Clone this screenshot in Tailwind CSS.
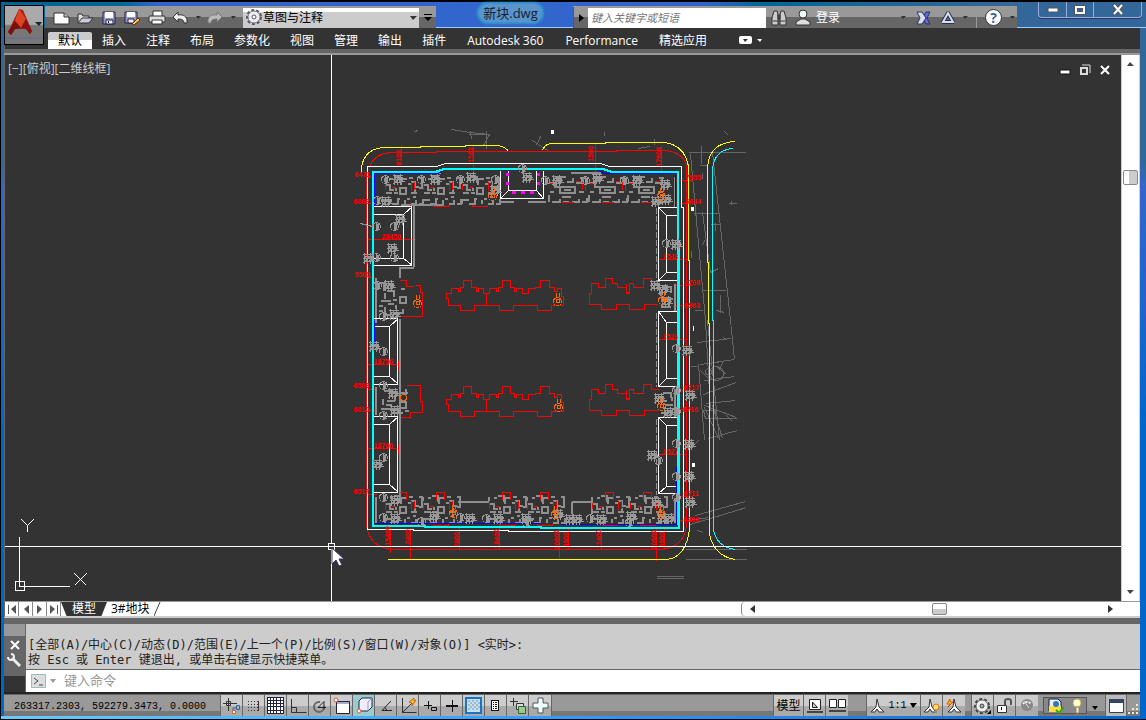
<!DOCTYPE html>
<html lang="zh-CN">

<head>
    <meta charset="UTF-8">
    <meta name="viewport" content="width=device-width, initial-scale=1.0">
    <title>新块.dwg</title>
    <script src="https://cdn.jsdelivr.net/npm/@tailwindcss/browser@4"></script>
</head>

<body class="h-screen overflow-hidden bg-black font-['Open_Sans','Noto_Sans_CJK_SC',sans-serif] text-xs">
    <div class="relative flex h-full flex-col border-t-2 border-b border-l border-black bg-[linear-gradient(to_bottom,#369_0%,#369_22%,#36c_26%,#06c_60%,#06c_100%)] pl-[3px] pr-[6px]">

        <!-- Title bar -->
        <header class="-mr-[6px] -ml-[3px] flex h-[26px] shrink-0 bg-[linear-gradient(to_right,#069_0,#069_120px,#36c_160px,#36c_700px,#069_760px,#369_1000px)] pl-[44px] pt-1">
            <div class="flex w-[391px] shrink-0 items-center border-t border-[#999] bg-linear-to-b from-[#999] from-48% to-[#666] to-48% pl-2">
                <button aria-label="新建" class="w-6"><svg width="18" height="16" viewBox="0 0 18 16"><path d="M1 3h10l5 4v7H1z" fill="#fff" stroke="#333" /><path d="M11 3v4h5" fill="#bbb" stroke="#333" /></svg></button>
                <button aria-label="打开" class="w-6"><svg width="17" height="16" viewBox="0 0 17 16"><path d="M1 13V4h4l1 2h6v2" fill="#ddd" stroke="#333" /><path d="M1 13l4-5h11l-4 5z" fill="#ccd" stroke="#333" /></svg></button>
                <button aria-label="保存" class="w-6"><svg width="16" height="16" viewBox="0 0 16 16"><path d="M2 2h12v12H2z" fill="#99c" stroke="#224" /><path d="M4 2h8v6H4z" fill="#fff" /><path d="M5 10h7v4H5z" fill="#eee" stroke="#224" /><path d="M7 11h1v2H7z" fill="#224" /></svg></button>
                <button aria-label="另存为" class="w-6"><svg width="17" height="16" viewBox="0 0 17 16"><path d="M1 2h12v11H1z" fill="#99c" stroke="#224" /><path d="M3 2h8v5H3z" fill="#fff" /><path d="M4 9h6v4H4z" fill="#eee" stroke="#224" /><path d="M8 14l6-6 2 2-6 5z" fill="#fc6" stroke="#630" /></svg></button>
                <button aria-label="打印" class="w-6"><svg width="18" height="16" viewBox="0 0 18 16"><path d="M5 1h9v6H5z" fill="#fff" stroke="#333" /><rect x="1" y="6" width="16" height="6" rx="1" fill="#ddd" stroke="#333" /><path d="M4 10h10v4H4z" fill="#fff" stroke="#333" /></svg></button>
                <button aria-label="放弃" class="w-5"><svg width="16" height="16" viewBox="0 0 16 16"><path d="M1 7l5-5v3c6-1 9 2 9 6v2h-3c0-3-2-4-6-4v3z" fill="#eee" stroke="#333" /></svg></button>
                <button aria-label="放弃列表" class="w-4"><svg width="12" height="6" viewBox="0 0 12 6"><path d="M4 1h5L6 4z" fill="#333" /></svg></button>
                <button aria-label="重做" class="w-5"><svg width="16" height="16" viewBox="0 0 16 16"><path d="M15 7l-5-5v3c-6-1-9 2-9 6v2h3c0-3 2-4 6-4v3z" fill="#bbb" stroke="#777" /></svg></button>
                <button aria-label="重做列表" class="w-4"><svg width="12" height="6" viewBox="0 0 12 6"><path d="M4 1h5L6 4z" fill="#333" /></svg></button>
                <div class="relative h-5 w-[178px] border-t-4 border-white bg-[#ccc]">
                    <svg class="absolute -top-[3px] left-[3px]" width="17" height="17" viewBox="0 0 17 17"><circle cx="8" cy="8" r="7" fill="none" stroke="#556" stroke-width="2" stroke-dasharray="3 2" /><circle cx="8" cy="8" r="6" fill="#eee" stroke="#778" /><circle cx="8" cy="8" r="2" fill="#fff" stroke="#556" /></svg>
                    <select aria-label="工作空间" class="-mt-[2px] block h-[17px] w-full appearance-none pl-[20px] text-xs leading-4 text-black">
                        <option>草图与注释</option>
                    </select>
                    <svg class="absolute top-1 right-[2px]" width="7" height="4" viewBox="0 0 7 4"><path d="M0 0h7L3 4z" fill="#333" /></svg>
                </div>
                <button aria-label="自定义" class="flex h-full w-[17px] items-center justify-center"><svg width="8" height="8" viewBox="0 0 8 8"><path d="M0 0h8v1H0zM0 3h8L4 7z" fill="#000" /></svg></button>
            </div>
            <div class="flex w-[137px] shrink-0 justify-center border-b border-[#9cf] bg-[#36c]">
                <h1 class="-mt-[2px] ml-3 h-[18px] rounded-full bg-[#5b94cc] px-1 text-[13px] leading-[18px] text-[#123] shadow-[0_0_2px_2px_#39c]">新块.dwg</h1>
            </div>
            <div class="flex w-[444px] shrink-0 items-center border-t border-[#999] bg-linear-to-b from-[#999] from-48% to-[#666] to-48%">
                <button aria-label="展开" class="flex h-full w-[15px] items-center justify-center border-l border-[#555]"><svg width="5" height="8" viewBox="0 0 5 8"><path d="M0 0l5 4-5 4z" fill="#000" /></svg></button>
                <input type="text" aria-label="搜索" placeholder="键入关键字或短语" class="h-5 w-[178px] bg-white pl-[3px] text-[11px] italic placeholder:text-[#777]">
                <button aria-label="查找" class="ml-[5px]"><svg width="16" height="16" viewBox="0 0 16 16"><path d="M3 1h3l1 4v10H1V8zM10 1h3l2 7v7H9V5z" fill="#ccc" stroke="#333" /><path d="M7 5h2v4H7zM2 11h5M9 11h5" fill="#555" stroke="#333" /></svg></button>
                <button class="ml-2 flex items-center gap-[5px] text-white"><svg width="16" height="17" viewBox="0 0 16 17"><path d="M1 16v-3l5-3h4l5 3v3z" fill="#ddd" stroke="#333" /><circle cx="8" cy="5" r="4" fill="#eff" stroke="#333" /></svg>登录</button>
                <svg class="ml-[61px]" width="5" height="3" viewBox="0 0 5 3"><path d="M0 0h5L2 3z" fill="#333" /></svg>
                <button aria-label="Exchange" class="ml-[10px]"><svg width="15" height="14" viewBox="0 0 15 14"><path d="M14 1h-4L6 7l4 6h4l-3-6z" fill="#66d" stroke="#236" /><path d="M1 1h5l4 6-4 6H1l3-6z" fill="#dde" stroke="#236" /></svg></button>
                <button aria-label="Autodesk 360" class="ml-[9px]"><svg width="16" height="15" viewBox="0 0 16 15"><path d="M8 3l5 9H3z" fill="none" stroke="#236" stroke-width="4" stroke-linejoin="round" /><path d="M8 3l5 9H3z" fill="none" stroke="#ddd" stroke-width="2" /></svg></button>
                <svg class="ml-[7px]" width="5" height="3" viewBox="0 0 5 3"><path d="M0 0h5L2 3z" fill="#333" /></svg>
                <span class="mt-2 ml-2 h-3 w-px bg-[#999]"></span>
                <button aria-label="帮助" class="ml-2 h-[17px] w-[17px] rounded-full border border-[#333] bg-white text-center text-sm leading-[15px] font-bold text-[#369]">?</button>
                <svg class="ml-[8px]" width="5" height="3" viewBox="0 0 5 3"><path d="M0 0h5L2 3z" fill="#333" /></svg>
            </div>
            <div class="flex flex-1 justify-end border-b border-[#9cf] pr-1">
                <div class="-mt-1 flex h-4 rounded-b border-x border-b border-[#9ad] shadow-[0_1px_0_#336]">
                    <button aria-label="最小化" class="flex w-[28px] items-center justify-center border-r border-[#9ad]"><svg width="12" height="6" viewBox="0 0 12 6"><path d="M1 1h10v4H1z" fill="#fff" stroke="#555" /></svg></button>
                    <button aria-label="最大化" class="flex w-[27px] items-center justify-center border-r border-[#9ad]"><svg width="12" height="10" viewBox="0 0 12 10"><path d="M2 2h8v6H2z" fill="none" stroke="#555" stroke-width="4" /><path d="M2 2h8v6H2z" fill="none" stroke="#fff" stroke-width="2" /></svg></button>
                    <button aria-label="关闭" class="flex w-[47px] items-center justify-center"><svg width="12" height="11" viewBox="0 0 12 11"><path d="M2 1l8 9M10 1L2 10" stroke="#555" stroke-width="4" /><path d="M2 1l8 9M10 1L2 10" stroke="#fff" stroke-width="2" /></svg></button>
                </div>
            </div>
        </header>

        <!-- Application button -->
        <button aria-label="应用程序菜单" class="absolute top-[3px] left-[3px] z-10 h-10 w-10 border border-black bg-linear-to-b from-[#aaa] from-48% to-[#777] to-52%">
            <svg width="38" height="38" viewBox="0 0 38 38"><path d="M14 3l4 1 9 21-2 3-4-5H10l-4 6-3-3z" fill="#a21" /><path d="M14 3l-4 12 6 7 5-9z" fill="#d42" /><path d="M3 26l7-11 6 7-6 1-4 6z" fill="#711" /><path d="M16 22l5-9 6 12-2 3-4-5z" fill="#811" /><path d="M30 16h7l-3 4z" fill="#222" /><path d="M0 32h38" stroke="#669" /></svg>
        </button>

        <!-- Ribbon tabs -->
        <nav class="flex h-[21px] shrink-0 items-end border-l border-[#666] bg-[#333] pl-[43px] text-white">
            <button class="h-[17px] rounded-t-xs bg-linear-to-b from-[#ccc] from-50% to-white to-50% px-[10px] leading-[17px] text-black">默认</button>
            <button class="px-[10px] leading-[17px]">插入</button>
            <button class="px-[10px] leading-[17px]">注释</button>
            <button class="px-[10px] leading-[17px]">布局</button>
            <button class="px-[10px] leading-[17px]">参数化</button>
            <button class="px-[10px] leading-[17px]">视图</button>
            <button class="px-[10px] leading-[17px]">管理</button>
            <button class="px-[10px] leading-[17px]">输出</button>
            <button class="px-[10px] leading-[17px]">插件</button>
            <button class="px-[11px] leading-[17px]">Autodesk 360</button>
            <button class="px-[11px] leading-[17px]">Performance</button>
            <button class="px-[10px] leading-[17px]">精选应用</button>
            <button aria-label="功能区选项" class="mb-[5px] ml-[22px]"><svg width="24" height="8" viewBox="0 0 24 8"><rect width="13" height="8" rx="2" fill="#fff" /><path d="M4 3h5L6 6z" fill="#333" /><path d="M18 3h5l-2 3z" fill="#fff" /></svg></button>
        </nav>
        <div class="h-[6px] shrink-0 border-b-2 border-[#999] bg-[#666]"></div>

        <!-- Drawing area -->
        <main class="flex min-h-0 flex-1 border-l border-[#666]">
            <div class="relative min-w-0 flex-1 overflow-hidden bg-[#333]">
                <svg class="absolute inset-0 h-full w-full" fill="none" shape-rendering="crispEdges">
                    <defs>
                        <!-- flat plan, origin at the stair core -->
                        <g id="flat">
                            <path d="M-3-4h6v6h-6z M-18-7h5v5h4 M-9-15h6v6 M-2-7v-6h6 M8-10h4v5h4 M16-14h3v10h-3 M-17 1h6 M-9 1h4 M8 1h6 M12-3v5 M-18 12V8h4 M-11 12h6V8 M2 12V8 M8 12h5V8 M16 12h4V7 M-6 7h3 M4 7h3 M-18-14v4 M-7-4v3 M5-8h3 M-13-13h3 M6-14h4 M-14 8h3 M10 5h3" stroke="#8f8f8f" stroke-width="2" />
                            <path d="M-7 13v2H8v-2 M-17-8v6 M9-10v9 M12-10v8 M-11-4h4" stroke="#f00" />
                        </g>
                        <g id="flatwide">
                            <path d="M-7-3H8v6H-7z M-3 0h7 M-18-7h6v4h4 M-9-8v-5h8 M0-8h6v-4 M9-7h7v-5 M-18 12V8 M-15 12h8V9 M-4 12h6 M0 8v-2 M5 12h7V9 M15 12h5V8 M-17 2h4 M12 2h5 M-12-12h5 M13-12h5 M-18 5v4 M-5 7h9" stroke="#8f8f8f" stroke-width="2" />
                            <path d="M-17-6h4 M-5 13H7 M16-8v8 M19-8v9 M9-8h4" stroke="#f00" />
                        </g>
                        <g id="block" stroke="#999">
                            <path d="M0 2h10 M2 0v11 M5 1v10 M0 6h11 M1 10l8-7 M8 0v11 M3 4h6v5H2z M6 8h6 M10 3v5" />
                        </g>
                        <g id="ring" stroke="#999">
                            <circle r="4" /><path d="M0-4v8 M1-3v6 M2-3v6" />
                        </g>
                        <g id="lift" stroke="#f60">
                            <circle r="4" /><path d="M-1-2h3v3h-3z M-1-9v4 M2-9v4" />
                        </g>
                        <!-- tower outlines -->
                        <g id="towers" stroke="#f00">
                            <path d="M474 416H460V411H448V404H446V399H451V394H458V397H460V393H463V386H471V393H476V397H478V394H483V399H486V411H474Z" />
                            <path d="M486 411H499V416H513V411H537V416H551V411H563V402H561V394H557V397H554V393H549V386H540V393H535V394H528V399H522V394H516V397H514V393H510V386H502V393H498V397H496V394H489V399H486" />
                            <path d="M657 410h-13v5h-15v-5h-13v5h-15v-5h-12v-11h2v-10h7v4h7v-9h7v5h5v4h9v6h3v-10h4v4h10v-9h8v5h8" />
                            <path d="M626 389v9h3" />
                        </g>
                    </defs>

                    <g transform="translate(-4.5 -54.5)">
                        <!-- survey background -->
                        <g stroke="#666">
                            <path d="M688 152h57 M690 154l15 166 5 90 M712 152l18 168 4 39 M693 213h26 M701 290h24 M707 320l12 120 M694 310h8 M702 212l8 60 8-4 M697 342l34-4 M700 364l34 -5 M698 364l6 76 M704 380l30-4 M703 394l33-12 M706 403l29-3 M704 405l32 12 M705 418h31 M708 438l29-8 M704 407l14 31 M712 405l10 33 M698 440l-4 4" />
                            <path d="M695 515l50-14 M690 524l56-17 M688 520l20-3 M685 559h61 M685 549h61 M656 576h27 M656 578h27 M451 129l18 3 20 2 M470 131l1 8 M486 130v18 M489 134l-6 11 M532 140l18 12 M536 145l4-9 M468 134h20 M724 131l4 4 M414 131l4-1 M604 131v4 M654 138v6 M638 148l12-2 M701 145v18 M699 165h8 M702 172v6 M710 224h10 M715 222v8 M728 203h8 M731 200v4 M704 240l-2 5 M720 294v18 M716 310l8 2 M691 250v7 M700 370l8 8 M716 366l10 8 M722 362l-3 7 M703 532l-6-2" />
                            <circle cx="716" cy="373" r="7" /><circle cx="708" cy="371" r="3" />
                            <path d="M712 362h6 M723 337l4 3 M690 366h6 M726 415l6 6 M703 410h12v8h-10z" />
                        </g>

                        <!-- red line and roads -->
                        <g stroke="#f00">
                            <path d="M366 172V525Q369 547 392 549H662Q684 546 686 524V166Q683 151 663 150H616V151H436V152H392Q372 153 369 168" />
                            <path d="M401 145v15 M473 145v28 M595 142v35 M661 145v28 M390 527v25 M410 527v31 M459 527v22 M499 527v22 M559 527v31 M568 527v22 M601 527v22 M656 527v33 M664 527v22" />
                            <path d="M366 177h6 M362 203h10 M366 277h8 M366 389h9 M364 410h10 M366 494h10 M674 180h18 M674 203h18 M674 285h18 M674 305h18 M674 390h18 M674 409h18 M674 496h18 M674 520h18" />
                            <path d="M366 239h49 M366 364h33 M366 448h33 M656 259h29 M656 339h30 M656 454h30 M413 235v8 M398 360v9 M398 444v9 M657 256v7 M657 335v8" />
                        </g>
                        <g stroke="#ff0">
                            <path d="M361 172V166Q365 147 385 147H420V146H465V145H497Q505 146 508 151 M542 150Q544 144 550 143H605V142H663Q684 144 688 166V200M688 200V260H689V528Q686 556 667 559H387" />
                            <path d="M735 141Q708 142 707 168V262H708V323H709V534Q714 556 735 559" />
                        </g>
                        <path d="M733 148Q713 149 712 170V320H713V530Q717 547 735 549" stroke="#0ff" />

                        <!-- flats along the edge -->
                        <path d="M413 204v62 M413 267h-14v10 M399 318v178 M400 204h43 M500 201h13 M527 201h18" stroke="#8f8f8f" stroke-width="2" />
                        <path d="M656 207v74 M656 312v74 M656 418v76" stroke="#8f8f8f" stroke-dasharray="6 2" />
                        <path d="M375 277v45 M375 386v28 M375 496v27 M674 176v30 M674 283v27 M674 388v28 M674 497v25 M457 501h31 M571 501h20v12 M571 501v12 M400 172h40 M570 172h30" stroke="#8f8f8f" stroke-width="2" />
                        <use href="#flat" x="402" y="191" /><use href="#flat" x="440" y="191" /><use href="#flat" x="479" y="191" />
                        <use href="#flatwide" x="566" y="189" /><use href="#flatwide" x="606" y="189" /><use href="#flatwide" x="645" y="189" />
                        <use href="#flat" x="402" y="510" /><use href="#flat" x="440" y="510" /><use href="#flat" x="506" y="510" /><use href="#flat" x="544" y="510" />
                        <use href="#flat" x="609" y="510" /><use href="#flat" x="647" y="510" />
                        <path d="M399 492h7v7 M436 499v-7h8v7 M502 499v-7h8v7 M540 499v-7h8v7 M605 499v-7h8v7 M643 499v-7h8v7" stroke="#f00" />
                        <g stroke="#8f8f8f" stroke-width="2">
                            <path d="M399 296h6v6h-6z M378 282h5v8 M386 290h7v6 M380 300h10 M384 306v8h6 M393 312h8 M395 304v4 M390 283v4 M384 292v6 M378 305h4 M392 299h4 M400 288h4 M402 308v5 M378 310h4 M387 303h6" />
                            <path d="M399 401h6v6h-6z M383 390h8v6 M380 408h14 M386 400h8 M392 412h10 M400 392h7 M405 388v6 M382 398v6 M394 396v4 M385 404h6 M408 410h-4" />
                            <path d="M662 286h8v6 M664 298h8 M660 306h10 M662 392h8v5 M664 404h8 M660 412h8 M660 290v5 M668 302v4 M671 396v4 M661 400h5" />
                        </g>
                        <path d="M399 280h7v6h7 M414 285h6v7h2v24h-24 M406 385h14v16h2v11h-12v5h-10" stroke="#f00" />

                        <use href="#towers" /><use href="#towers" y="-106" />

                        <!-- podium roofs -->
                        <g stroke="#fff">
                            <path d="M373 206h38v59h-38 M373 214h30v44h-30 M403 214l9-8 M403 258l9 7" />
                            <path d="M373 318h24v66h-24 M373 326h16v50h-16 M389 326l9-8 M389 376l9 8" />
                            <path d="M373 416h24v76h-24 M373 424h16v60h-16 M389 424l9-8 M389 484l9 8" />
                            <path d="M677 207h-19v73h19 M677 215h-11v57h11 M666 215l-8-8 M666 272l-8 8" />
                            <path d="M677 311h-19v75h19 M677 322h-11v56h11 M666 322l-8-11 M666 378l-8 8" />
                            <path d="M677 417h-19v76h19 M677 425h-11v61h11 M666 425l-8-8 M666 486l-8 7" />
                            <path d="M500 170v28h43v-28 M508 170v20h28v-20 M508 190l-8 8 M536 190l7 8" />
                        </g>
                        <path d="M505 174h3 M505 183h3 M511 192h4 M520 192h4 M529 192h4 M536 174h3 M536 183h3" stroke="#f0f" stroke-width="3" />

                        <!-- plot boundary -->
                        <path d="M367 166H436L445 163H600L609 166H681V207H683V531H508V530H413V529H367Z" stroke="#fff" />
                        <path d="M374 205V173H437L443 171 M598 170L606 173H675V206 M374 320V345 M374 523H540 M676 466V524H560" stroke="#00f" />
                        <path d="M372 170V525H424V526H540V527H678V240H677V171H610L601 168H445L436 171H372" stroke="#0ff" stroke-width="2" />
                        <path d="M372 172V524 M677 172V524" stroke="#0ff" stroke-width="2" />

                        <!-- annotation blocks -->
                        <use href="#ring" x="385" y="179" /><use href="#block" x="392" y="173" /><use href="#ring" x="421" y="179" /><use href="#block" x="429" y="173" />
                        <use href="#ring" x="460" y="179" /><use href="#block" x="465" y="171" /><use href="#ring" x="495" y="179" /><use href="#block" x="489" y="184" />
                        <use href="#ring" x="377" y="200" /><use href="#block" x="380" y="195" /><use href="#ring" x="522" y="168" /><use href="#block" x="521" y="171" />
                        <use href="#ring" x="545" y="180" /><use href="#block" x="551" y="174" /><use href="#ring" x="585" y="180" /><use href="#block" x="591" y="172" />
                        <use href="#ring" x="624" y="180" /><use href="#block" x="631" y="174" /><use href="#block" x="659" y="178" /><use href="#block" x="650" y="195" /><use href="#block" x="660" y="193" />
                        <use href="#ring" x="376" y="226" /><use href="#ring" x="394" y="226" /><use href="#block" x="394" y="213" /><path d="M360 223l12 3" stroke="#8f8f8f" />
                        <use href="#block" x="386" y="242" /><use href="#ring" x="394" y="257" /><use href="#ring" x="376" y="257" /><use href="#block" x="362" y="252" />
                        <use href="#ring" x="377" y="285" /><use href="#block" x="383" y="279" /><use href="#block" x="388" y="308" /><use href="#ring" x="383" y="316" />
                        <use href="#ring" x="383" y="351" /><use href="#block" x="368" y="340" /><use href="#ring" x="383" y="385" /><use href="#block" x="387" y="387" /><use href="#block" x="389" y="404" /><use href="#ring" x="383" y="415" />
                        <use href="#ring" x="383" y="457" /><use href="#block" x="371" y="458" /><use href="#ring" x="383" y="497" /><use href="#block" x="389" y="494" />
                        <use href="#ring" x="383" y="517" /><use href="#block" x="389" y="512" /><use href="#ring" x="421" y="521" /><use href="#block" x="428" y="510" /><use href="#ring" x="460" y="517" />
                        <use href="#block" x="464" y="512" /><use href="#ring" x="486" y="518" /><use href="#block" x="492" y="512" /><use href="#block" x="520" y="512" /><use href="#ring" x="526" y="522" />
                        <use href="#block" x="552" y="508" /><use href="#block" x="564" y="513" /><use href="#block" x="571" y="513" /><use href="#ring" x="590" y="518" /><use href="#block" x="595" y="513" />
                        <use href="#block" x="625" y="510" /><use href="#ring" x="629" y="522" /><use href="#block" x="656" y="512" /><use href="#block" x="650" y="496" /><use href="#block" x="663" y="512" />
                        <use href="#ring" x="666" y="243" /><use href="#block" x="670" y="238" /><use href="#block" x="649" y="279" /><use href="#block" x="660" y="295" /><use href="#block" x="657" y="283" />
                        <use href="#ring" x="676" y="348" /><use href="#block" x="681" y="344" /><use href="#block" x="684" y="389" /><use href="#block" x="653" y="392" /><use href="#block" x="662" y="406" /><use href="#ring" x="676" y="411" /><use href="#ring" x="676" y="390" />
                        <use href="#ring" x="676" y="443" /><use href="#block" x="683" y="438" /><use href="#block" x="646" y="449" /><use href="#ring" x="658" y="460" />
                        <use href="#ring" x="676" y="476" /><use href="#block" x="683" y="470" /><use href="#block" x="684" y="496" /><use href="#ring" x="676" y="497" />

                        <use href="#lift" x="417" y="303" /><use href="#lift" x="557" y="301" /><use href="#lift" x="558" y="407" /><use href="#lift" x="661" y="406" />
                        <use href="#lift" x="453" y="513" /><use href="#lift" x="555" y="514" /><use href="#lift" x="661" y="514" /><use href="#lift" x="492" y="196" /><use href="#lift" x="661" y="196" /><use href="#lift" x="662" y="300" />
                        <circle cx="403" cy="397" r="3" stroke="#f60" />

                        <path d="M551 130h2v3h-2z M691 207h2v3h-2z M693 325v5 M692 463h2v3h-2z" fill="#fff" stroke="#fff" />

                        <!-- dimensions -->
                        <g fill="#f00" class="font-['Liberation_Sans',sans-serif] text-[7px] font-bold">
                            <text x="354" y="176">6471</text><text x="353" y="203">6002</text><text x="381" y="238">28450</text><text x="354" y="276">5500</text>
                            <text x="373" y="363">18756</text><text x="353" y="387">6508</text><text x="353" y="411">6010</text><text x="373" y="447">18766</text><text x="353" y="493">6517</text>
                            <text x="685" y="179">7955</text><text x="685" y="203">6644</text><text x="662" y="258">1548</text><text x="684" y="284">6708</text><text x="684" y="307">5563</text>
                            <text x="662" y="338">1524</text><text x="683" y="389">6717</text><text x="682" y="411">6716</text><text x="662" y="453">1527</text><text x="683" y="495">6711</text><text x="683" y="521">6200</text>
                            <text transform="translate(400 165) rotate(-90)">8108</text><text transform="translate(472 162) rotate(-90)">1103</text><text transform="translate(592 161) rotate(-90)">1560</text><text transform="translate(660 166) rotate(-90)">17604</text>
                            <text transform="translate(389 545) rotate(-90)">15480</text><text transform="translate(409 548) rotate(-90)">12400</text><text transform="translate(458 547) rotate(-90)">7800</text><text transform="translate(498 548) rotate(-90)">18400</text>
                            <text transform="translate(558 549) rotate(-90)">20600</text><text transform="translate(567 547) rotate(-90)">4600</text><text transform="translate(600 548) rotate(-90)">11400</text><text transform="translate(655 549) rotate(-90)">20600</text><text transform="translate(663 547) rotate(-90)">4600</text>
                        </g>

                        <!-- UCS icon -->
                        <path d="M19 536v50h50 M15 581h9v9h-9z M21 519l6 6 6-6 M27 525v6 M74 573l12 12 M86 573l-12 12" stroke="#fff" />
                        <path d="M328 543h6v6h-6z" stroke="#fff" />
                        <path d="M331 54v489 M331 549v52" stroke="#fff" />
                    </g>
                    <line x1="0" y1="491" x2="100%" y2="491" stroke="#fff" transform="translate(0 .5)" />
                    <path d="M327 493v16l4-4 3 6 3-1-3-6h5z" fill="#fff" stroke="#336" shape-rendering="auto" />
                </svg>
                <p class="absolute top-[5px] left-[3px] text-xs leading-[18px] text-[#ccc]">[−][俯视][二维线框]</p>
                <div class="absolute top-[9px] right-[10px] flex items-center gap-2">
                    <button aria-label="最小化视口"><svg width="12" height="12" viewBox="0 0 12 12"><path d="M1 6h10v4H1z" fill="#fff" stroke="#111" /></svg></button>
                    <button aria-label="还原视口"><svg width="12" height="12" viewBox="0 0 12 12"><path d="M3 1h8v8" fill="none" stroke="#ddd" /><path d="M2 4h6v6H2z" fill="none" stroke="#ddd" stroke-width="2" /></svg></button>
                    <button aria-label="关闭视口"><svg width="12" height="12" viewBox="0 0 12 12"><path d="M2 2l8 8M10 2l-8 8" stroke="#fff" stroke-width="2" /></svg></button>
                </div>
            </div>
            <!-- Vertical scroll -->
            <div class="relative flex w-[19px] shrink-0 flex-col items-center justify-between border-x border-[#ccc] bg-white py-[7px]">
                <svg width="7" height="4" viewBox="0 0 7 4"><path d="M0 4l3-4 4 4z" fill="#444" /></svg>
                <div class="absolute top-[21%] h-[15px] w-[15px] rounded-xs border border-[#888] bg-linear-to-r from-white from-40% to-[#ccc] to-40%"></div>
                <svg width="7" height="4" viewBox="0 0 7 4"><path d="M0 0l3 4 4-4z" fill="#444" /></svg>
            </div>
        </main>

        <!-- Layout tabs -->
        <div class="flex h-[17px] shrink-0 items-stretch border-t border-b-2 border-l border-t-[#999] border-b-[#ccc] border-l-[#666] bg-white">
            <button aria-label="第一个" class="flex w-[14px] items-center justify-center border-r border-[#888]"><svg width="8" height="9" viewBox="0 0 8 9"><path d="M0 0h1v9H0zM8 0v9L3 4z" fill="#555" /></svg></button>
            <button aria-label="上一个" class="flex w-[14px] items-center justify-center border-r border-[#888]"><svg width="8" height="9" viewBox="0 0 8 9"><path d="M7 0v9L2 4z" fill="#555" /></svg></button>
            <button aria-label="下一个" class="flex w-[14px] items-center justify-center border-r border-[#888]"><svg width="8" height="9" viewBox="0 0 8 9"><path d="M1 0v9l5-5z" fill="#555" /></svg></button>
            <button aria-label="最后一个" class="flex w-[14px] items-center justify-center border-r border-[#888]"><svg width="8" height="9" viewBox="0 0 8 9"><path d="M7 0h1v9H7zM0 0v9l5-5z" fill="#555" /></svg></button>
            <button class="w-[46px] bg-[#333] text-center leading-[14px] text-white [clip-path:polygon(0_0,100%_0,88%_100%,12%_100%)]">模型</button>
            <button class="pl-1 leading-[14px] text-black">3#地块</button>
            <svg class="ml-1" width="10" height="14" viewBox="0 0 10 14"><path d="M0 14L6 0" stroke="#444" /></svg>
            <div class="flex-1"></div>
            <!-- Horizontal scroll -->
            <div class="relative mr-[19px] flex w-[35%] max-w-[380px] shrink-0 items-center justify-between rounded-l border-l border-[#889] px-2">
                <svg width="5" height="8" viewBox="0 0 5 8"><path d="M5 0v8L0 4z" fill="#333" /></svg>
                <div class="absolute left-1/2 h-3 w-[15px] rounded-xs border border-[#888] bg-linear-to-b from-white from-45% to-[#ccc] to-45%"></div>
                <svg width="5" height="8" viewBox="0 0 5 8"><path d="M0 0v8l5-4z" fill="#333" /></svg>
            </div>
        </div>

        <!-- Command line -->
        <section class="flex h-[76px] shrink-0 border-t-[6px] border-b-2 border-t-[#666] border-b-[#222]">
            <div class="flex w-[22px] shrink-0 flex-col items-center border-r border-[#666] bg-[#666]">
                <div class="h-3 w-full bg-[#999]"></div>
                <button aria-label="关闭命令行" class="mt-1"><svg width="10" height="10" viewBox="0 0 10 10"><path d="M1 1l8 8M9 1L1 9" stroke="#fff" stroke-width="2" /></svg></button>
                <button aria-label="自定义命令行" class="mt-[3px]"><svg width="15" height="15" viewBox="0 0 15 15"><path d="M5 5l8 8" stroke="#eee" stroke-width="3" /><path d="M4 1a3 3 0 1 1-3 3" fill="none" stroke="#eee" stroke-width="2" /></svg></button>
                <div class="mt-auto h-4 w-full bg-[#333]"></div>
            </div>
            <div class="flex min-w-0 flex-1 flex-col">
                <div class="flex-1 overflow-hidden bg-[#ccc] pt-[14px] pl-[2px] font-['DejaVu_Sans_Mono','Noto_Sans_CJK_SC',monospace] text-xs leading-[15px] whitespace-nowrap text-[#222]">
                    <p>[全部(A)/中心(C)/动态(D)/范围(E)/上一个(P)/比例(S)/窗口(W)/对象(O)] &lt;实时&gt;:</p>
                    <p>按 Esc 或 Enter 键退出, 或单击右键显示快捷菜单。</p>
                </div>
                <div class="flex h-[23px] shrink-0 items-center border-t border-[#666] bg-white pl-[5px]">
                    <button aria-label="最近使用的命令" class="flex items-center gap-1"><svg width="15" height="14" viewBox="0 0 15 14"><path d="M.5.5h14v13H.5z" fill="#ddd" stroke="#9bb" /><path d="M3 4l4 3-4 3M8 11h4" fill="none" stroke="#444" /></svg><svg width="6" height="4" viewBox="0 0 6 4"><path d="M0 0h6L3 4z" fill="#999" /></svg></button>
                    <input type="text" aria-label="命令" placeholder="键入命令" class="-mt-[2px] ml-2 h-5 flex-1 text-[13px] placeholder:text-[#999]">
                </div>
            </div>
        </section>

        <!-- Status bar -->
        <footer class="flex h-[22px] shrink-0 items-stretch border-t border-[#666] bg-linear-to-b from-[#999] from-75% to-[#777] to-75% text-black">
            <output class="w-[216px] shrink-0 pl-[10px] font-['Liberation_Mono',monospace] text-[10px] leading-6">263317.2303, 592279.3473, 0.0000</output>
            <div class="flex divide-x divide-[#666] border-x border-[#666] bg-linear-to-b from-[#ccc] from-50% to-[#aaa] to-55% [&>button]:flex [&>button]:w-[22px] [&>button]:items-center [&>button]:justify-center">
                <button aria-label="推断约束"><svg width="18" height="18" viewBox="0 0 18 18"><path d="M5.5 1v13M0 6.5h14" stroke="#333" /><path d="M3.5 4.5h4v4h-4z" fill="none" stroke="#333" /><path d="M10 15v-4h4M13.5 8.5h3v4h-3z" fill="none" stroke="#36a" /><path d="M9.5 13.5h3v3h-3z" stroke="#c63" fill="#fff" /></svg></button>
                <button aria-label="捕捉模式"><svg width="14" height="14" viewBox="0 0 14 14" shape-rendering="crispEdges"><path d="M1 2.5h10M1 5.5h10M1 8.5h10M1 11.5h12" stroke="#333" stroke-dasharray="1 2" /><path d="M11.5 2v10" stroke="#333" /></svg></button>
                <button aria-label="栅格显示"><svg width="17" height="17" viewBox="0 0 17 17" shape-rendering="crispEdges"><path d="M0 0h17v17H0z" fill="#fff" /><path d="M.5.5h16v16H.5zM3.5 0v17M6.5 0v17M9.5 0v17M13.5 0v17M0 3.5h17M0 6.5h17M0 9.5h17M0 13.5h17" fill="none" stroke="#224" /></svg></button>
                <button aria-label="正交模式"><svg width="18" height="18" viewBox="0 0 18 18"><path d="M2.5 2v13.5h15M2 10.5h5.5v5" fill="none" stroke="#333" /></svg></button>
                <button aria-label="极轴追踪"><svg width="16" height="16" viewBox="0 0 16 16"><circle cx="7" cy="9" r="5" fill="none" stroke="#666" stroke-width="2" stroke-dasharray="24 6" /><path d="M14 9.5H6l6-6v8" fill="none" stroke="#222" /></svg></button>
                <button aria-label="对象捕捉"><svg width="18" height="18" viewBox="0 0 18 18"><path d="M3.5 4.5h13v12h-13z" fill="#fff" stroke="#224" /><path d="M4 5h12v2H4z" fill="#aac" /><circle cx="3" cy="3" r="2" fill="#fff" stroke="#e52" /></svg></button>
                <button aria-label="三维对象捕捉" class="bg-[#9cc]"><svg width="18" height="18" viewBox="0 0 18 18"><path d="M4 4l3-3h10v9l-4 4H4z" fill="#eef" stroke="#224" /><path d="M13 14V5l4-4" fill="none" stroke="#99b" /><circle cx="4" cy="14" r="2" fill="#fff" stroke="#e52" /></svg></button>
                <button aria-label="对象捕捉追踪"><svg width="14" height="14" viewBox="0 0 14 14"><path d="M12 2L3 11.5h10M6 8.5l2 3" fill="none" stroke="#222" /></svg></button>
                <button aria-label="动态UCS"><svg width="18" height="18" viewBox="0 0 18 18"><path d="M3.5 1v14.5h14M3 16L13 6" fill="none" stroke="#333" /><path d="M10 5l5-4v3l2-1-4 6V6z" fill="#fb3" stroke="#c60" /></svg></button>
                <button aria-label="动态输入"><svg width="14" height="14" viewBox="0 0 14 14"><path d="M5.5 2v8M1 6.5h8M8.5 8.5h5v3h-5z" fill="none" stroke="#111" /></svg></button>
                <button aria-label="线宽"><svg width="14" height="14" viewBox="0 0 14 14"><path d="M7.5 1v12" stroke="#111" /><path d="M1 7h12" stroke="#111" stroke-width="2" /></svg></button>
                <button aria-label="透明度"><svg width="17" height="17" viewBox="0 0 17 17"><path d="M1 1h15v15H1z" fill="#cde" stroke="#17c" stroke-width="2" /><path d="M3 4h11M3 8h11M3 12h11" stroke="#9bc" stroke-width="2" stroke-dasharray="2 2" /><path d="M5 6h10M5 10h10" stroke="#9bc" stroke-width="2" stroke-dasharray="2 2" /></svg></button>
                <button aria-label="快捷特性"><svg width="9" height="11" viewBox="0 0 9 11" shape-rendering="crispEdges"><path d="M.5.5h7v10h-7z" fill="#fff" stroke="#111" /><path d="M2 2.5h1M4 2.5h2M2 4.5h1M4 4.5h2M2 6.5h1M4 6.5h2M2 8.5h1M4 8.5h2" stroke="#111" /></svg></button>
                <button aria-label="选择循环"><svg width="18" height="18" viewBox="0 0 18 18"><path d="M4.5 1v8M1 4.5h8" stroke="#333" /><path d="M7.5 6.5h7v6h-7z" fill="#ddd" stroke="#333" /><path d="M9.5 9.5h7v7h-7z" fill="#9c8" stroke="#363" /></svg></button>
                <button aria-label="注释监视器"><svg width="17" height="17" viewBox="0 0 17 17"><path d="M6 1h5v5h5v5h-5v5H6v-5H1V6h5z" fill="#eff" stroke="#555" /></svg></button>
            </div>
            <div class="flex-1"></div>
            <div class="flex divide-x divide-[#666] border-l border-[#666] bg-linear-to-b from-[#ccc] from-50% to-[#aaa] to-55%">
                <button class="w-[30px]">模型</button>
                <button aria-label="快速查看布局" class="flex w-[22px] items-center justify-center"><svg width="16" height="16" viewBox="0 0 16 16"><path d="M2.5 1.5h11v10h-11z" fill="#fff" stroke="#222" /><path d="M5.5 4v5.500h5z" stroke="#222" fill="#ccc" /><path d="M0 14h16" stroke="#444" stroke-width="2" /></svg></button>
                <button aria-label="快速查看图形" class="flex w-[22px] items-center justify-center"><svg width="17" height="16" viewBox="0 0 17 16"><path d="M.5 1.500h7v8h-7zM9.500 1.500h7v8h-7z" fill="#fff" stroke="#222" /><path d="M0 13h17" stroke="#444" stroke-width="2" /></svg></button>
            </div>
            <div class="w-[18px]"></div>
            <div class="flex divide-x divide-[#666] border-l border-[#666] bg-linear-to-b from-[#ccc] from-50% to-[#aaa] to-55%">
                <button class="flex w-[54px] items-center justify-center gap-[3px] font-['Liberation_Mono',monospace] text-[10px]"><svg width="15" height="16" viewBox="0 0 15 16"><path d="M7 1l2 8 5 5h-5l-2-3-2 3H1l5-5z" fill="#fff" stroke="#333" /></svg>1:1<svg width="7" height="5" viewBox="0 0 7 5"><path d="M0 0h7L3 5z" /></svg></button>
                <button aria-label="注释可见性" class="flex w-[22px] items-center justify-center"><svg width="17" height="16" viewBox="0 0 17 16"><path d="M7 1l2 8 4 5H9l-2-3-2 3H1l5-5z" fill="#fff" stroke="#333" /><circle cx="13" cy="9" r="3" fill="#fd7" stroke="#d70" /><path d="M12 13h2v2h-2z" fill="#888" /></svg></button>
                <button aria-label="自动缩放" class="flex w-[22px] items-center justify-center"><svg width="17" height="16" viewBox="0 0 17 16"><path d="M8 1l2 8 5 5h-5l-2-3-2 3H2l5-5z" fill="#fff" stroke="#333" /><path d="M4 1L1 6h3L2 9l5-5H4z" fill="#fc3" stroke="#d50" /></svg></button>
            </div>
            <div class="w-[6px]"></div>
            <div class="flex divide-x divide-[#666] border-l border-[#666] bg-linear-to-b from-[#ccc] from-50% to-[#aaa] to-55%">
                <button aria-label="切换工作空间" class="flex w-[22px] items-center justify-center"><svg width="18" height="18" viewBox="0 0 18 18"><circle cx="8" cy="9" r="7" fill="none" stroke="#444" stroke-width="2" stroke-dasharray="3 2" /><circle cx="8" cy="9" r="6" fill="#eee" stroke="#666" /><circle cx="8" cy="9" r="2" fill="#aaa" stroke="#444" /><path d="M17 13v4h-4z" /></svg></button>
                <button aria-label="锁定" class="flex w-[22px] items-center justify-center"><svg width="17" height="17" viewBox="0 0 17 17"><path d="M1.500 8.500h9v7h-9z" fill="#fff" stroke="#333" /><path d="M9 8V4q0-2 3-2t3 2v4" fill="none" stroke="#555" stroke-width="2" /><path d="M5 10h1v3H5z" /></svg></button>
                <button aria-label="硬件加速" class="flex w-[22px] items-center justify-center"><svg width="15" height="15" viewBox="0 0 15 15"><circle cx="7" cy="7" r="6" fill="#888" /><path d="M3 6a5 5 0 0 1 8 0" stroke="#eee" stroke-dasharray="2 1" fill="none" stroke-width="2" /><path d="M4 3l5 7" stroke="#ddd" /></svg></button>
            </div>
            <div class="my-[2px] mr-[5px] ml-[5px] flex w-[44px] items-center gap-2 border border-[#555] bg-[#888] pl-1">
                <svg width="16" height="16" viewBox="0 0 16 16"><path d="M1 1h9l3 3v9H1z" fill="#eef" stroke="#124" /><path d="M1 8h12v6H1z" fill="#fd4" /><circle cx="8" cy="6" r="3" fill="#37b" /><path d="M8 12l3 3 5-6" fill="none" stroke="#3a1" stroke-width="2" /></svg>
                <svg width="11" height="16" viewBox="0 0 11 16"><circle cx="5" cy="5" r="4" fill="#ffc" stroke="#ca6" /><path d="M4 9h3v6H4z" fill="#eec" stroke="#986" /></svg>
            </div>
            <button aria-label="状态栏菜单" class="w-[13px] pt-1"><svg width="6" height="4" viewBox="0 0 6 4"><path d="M0 0h6L3 4z" /></svg></button>
            <button aria-label="全屏显示" class="flex w-[22px] items-center justify-center border-x border-[#666] bg-[#bbb]"><svg width="15" height="14" viewBox="0 0 15 14"><path d="M.5.500h14v13H.5z" fill="#fff" stroke="#344" /><path d="M0 0h15v4H0z" fill="#346" /></svg></button>
            <svg class="mt-auto" width="13" height="13" viewBox="0 0 13 13"><path d="M9 1h2v2H9zM9 5h2v2H9zM9 9h2v2H9zM5 5h2v2H5zM5 9h2v2H5zM1 9h2v2H1z" fill="#eec" /></svg>
        </footer>
        <div class="-mr-[6px] -ml-[3px] h-[3px] shrink-0 bg-linear-to-r from-[#6cf] via-[#39f] to-[#06c]"></div>
    </div>
</body>

</html>
